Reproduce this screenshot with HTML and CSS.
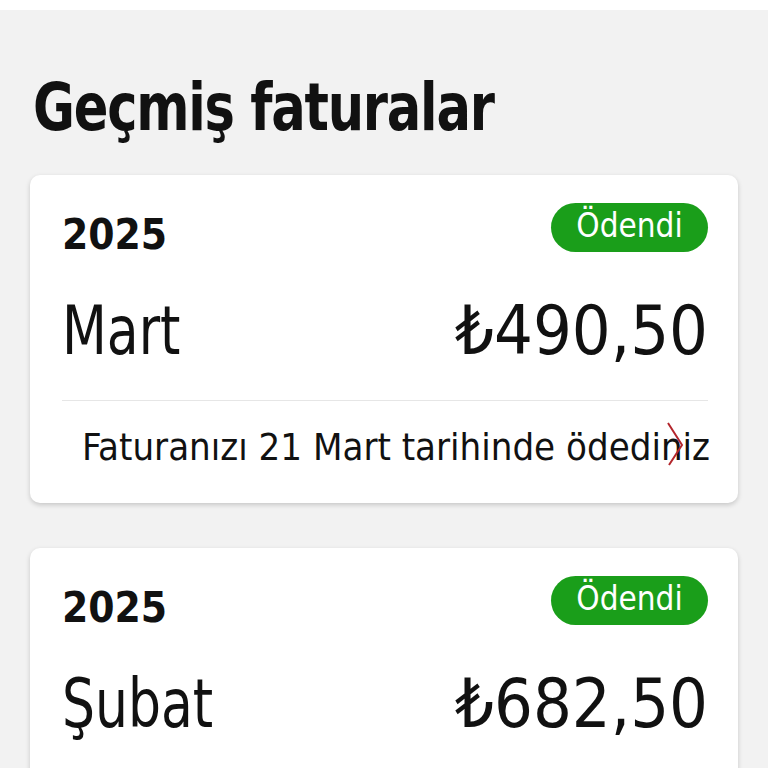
FILE: index.html
```html
<!DOCTYPE html>
<html lang="tr">
<head>
<meta charset="utf-8">
<link rel="stylesheet" href="styles.css">
</head>
<body>
<div class="topbar"></div>
<main class="page">
  <h1 class="title"><span class="squeeze">Geçmiş faturalar</span></h1>
  <section class="card">
    <div class="row-top">
      <span class="year">2025</span>
      <span class="badge">Ödendi</span>
    </div>
    <div class="row-main">
      <span class="month">Mart</span>
      <span class="amount">₺490,50</span>
    </div>
    <div class="footer">
      <span class="note">Faturanızı 21 Mart tarihinde ödediniz</span>
      <svg class="chev" viewBox="0 0 20 44" width="20" height="44"><path d="M2 1 L16 23 L3 43" fill="none" stroke="#b3262c" stroke-width="2"/></svg>
    </div>
  </section>
  <section class="card">
    <div class="row-top">
      <span class="year">2025</span>
      <span class="badge">Ödendi</span>
    </div>
    <div class="row-main">
      <span class="month">Şubat</span>
      <span class="amount">₺682,50</span>
    </div>
    <div class="footer"></div>
  </section>
</main>
</body>
</html>
```
FILE: styles.css
```css
* { box-sizing: border-box; }
html, body { margin: 0; padding: 0; }
body {
  background: #f2f2f2;
  font-family: "Liberation Sans Narrow", "DejaVu Sans Condensed", "Liberation Sans", sans-serif;
  color: #111;
  width: 768px;
  height: 768px;
  overflow: hidden;
}
.topbar { height: 10px; background: #fff; }
.page { padding: 0 30px; display: flex; flex-direction: column; gap: 45px; }
.title {
  margin: 63px 0 -13px 3px;
  font-size: 66px;
  line-height: 70px;
  font-weight: 700;
  letter-spacing: -1.4px;
  white-space: nowrap;
}
.squeeze { display: inline-block; transform: scaleX(0.86); transform-origin: left center; }
.card {
  background: #fff;
  border-radius: 10px;
  box-shadow: 0 2px 5px rgba(0,0,0,0.18);
  padding: 28px 30px 0 32px;
  display: flex;
  flex-direction: column;
  flex-shrink: 0;
}
.row-top { display: flex; justify-content: space-between; align-items: center; height: 49px; }
.year { font-size: 42px; font-weight: 700; line-height: 1; padding-top: 14px; }
.badge {
  background: #1a9e1a;
  color: #fff;
  border-radius: 25px;
  height: 49px;
  width: 157px;
  display: flex;
  align-items: center;
  justify-content: center;
  font-size: 33px;
  padding-bottom: 4px;
}
.row-main { display: flex; justify-content: space-between; align-items: center; height: 149px; padding: 13px 0 4px; border-bottom: 1px solid #e6e6e6; }
.month { font-size: 68px; line-height: 1; display: inline-block; transform: scaleX(0.85); transform-origin: left center; }
.amount { font-size: 68px; line-height: 1; }
.footer { position: relative; height: 102px; display: flex; align-items: center; justify-content: flex-end; padding-bottom: 10px; }
.note { font-size: 38px; line-height: 1; margin-right: -2px; }
.chev { position: absolute; right: 22px; top: 21px; }
```
